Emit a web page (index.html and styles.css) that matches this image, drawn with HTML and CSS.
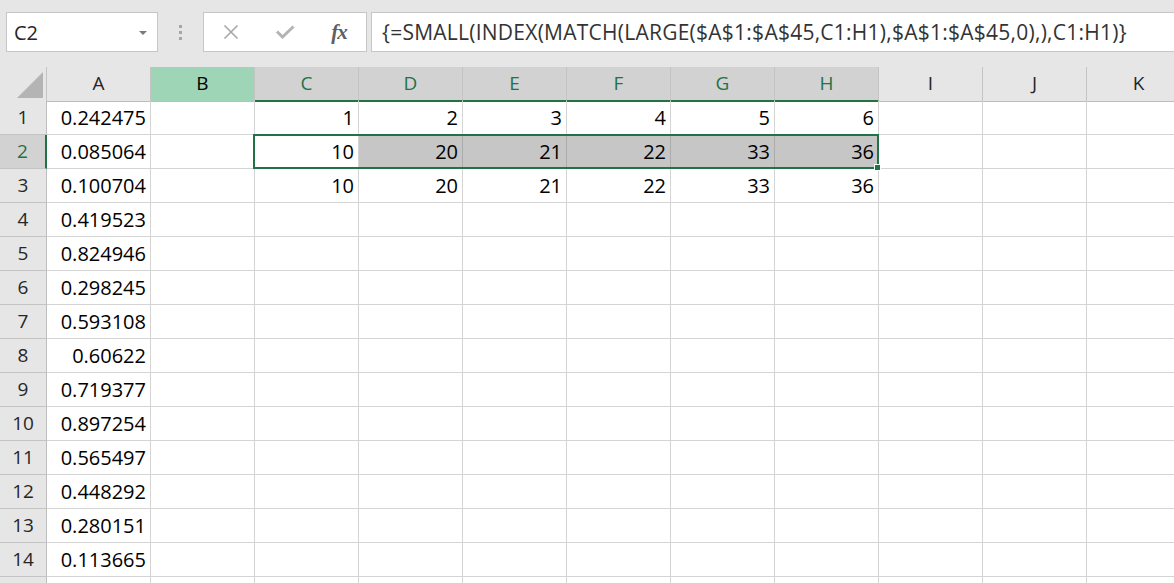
FILE: index.html
```html
<!DOCTYPE html>
<html lang="en">
<head>
    <meta charset="UTF-8">
    <title>Book1 - Excel</title>
    <link rel="stylesheet" href="styles.css">
</head>
<body>
    <div class="toolbar">
        <div class="namebox">
            <span>C2</span>
            <svg class="drop" width="8" height="5" viewBox="0 0 8 5"><path d="M0 0 L8 0 L4 4 Z" fill="#7a7a7a"/></svg>
        </div>
        <div class="grip"><i></i><i></i><i></i></div>
        <div class="fx-buttons">
            <span><svg width="16" height="14" viewBox="0 0 16 14"><path d="M1.5 0.5 L14.5 13.5 M14.5 0.5 L1.5 13.5" stroke="#a8a8a8" stroke-width="1.6" fill="none"/></svg></span>
            <span><svg width="20" height="14" viewBox="0 0 20 14"><path d="M2 6.5 L7.5 12 L18.5 1.5" stroke="#b4b4b4" stroke-width="3" fill="none"/></svg></span>
            <span class="fx">fx</span>
        </div>
        <div class="formula">{=SMALL(INDEX(MATCH(LARGE($A$1:$A$45,C1:H1),$A$1:$A$45,0),),C1:H1)}</div>
    </div>

    <div class="sheet">
        <div class="row head">
            <div class="corner"><svg width="26" height="26" viewBox="0 0 26 26"><path d="M0 26 L26 26 L26 0 Z" fill="#b4b4b4"/></svg></div>
            <div class="ch">A</div>
            <div class="ch active">B</div>
            <div class="ch sel">C</div>
            <div class="ch sel">D</div>
            <div class="ch sel">E</div>
            <div class="ch sel">F</div>
            <div class="ch sel">G</div>
            <div class="ch sel">H</div>
            <div class="ch">I</div>
            <div class="ch">J</div>
            <div class="ch">K</div>
        </div>
        <div class="row">
            <div class="rh">1</div><div class="cell">0.242475</div><div class="cell"></div>
            <div class="cell">1</div><div class="cell">2</div><div class="cell">3</div><div class="cell">4</div><div class="cell">5</div><div class="cell">6</div>
            <div class="cell"></div><div class="cell"></div><div class="cell"></div>
        </div>
        <div class="row">
            <div class="rh sel">2</div><div class="cell">0.085064</div><div class="cell"></div>
            <div class="cell">10</div><div class="cell hl">20</div><div class="cell hl">21</div><div class="cell hl">22</div><div class="cell hl">33</div><div class="cell hl">36</div>
            <div class="cell"></div><div class="cell"></div><div class="cell"></div>
        </div>
        <div class="row">
            <div class="rh">3</div><div class="cell">0.100704</div><div class="cell"></div>
            <div class="cell">10</div><div class="cell">20</div><div class="cell">21</div><div class="cell">22</div><div class="cell">33</div><div class="cell">36</div>
            <div class="cell"></div><div class="cell"></div><div class="cell"></div>
        </div>
        <div class="row">
            <div class="rh">4</div><div class="cell">0.419523</div><div class="cell"></div>
            <div class="cell"></div><div class="cell"></div><div class="cell"></div><div class="cell"></div><div class="cell"></div><div class="cell"></div>
            <div class="cell"></div><div class="cell"></div><div class="cell"></div>
        </div>
        <div class="row">
            <div class="rh">5</div><div class="cell">0.824946</div><div class="cell"></div>
            <div class="cell"></div><div class="cell"></div><div class="cell"></div><div class="cell"></div><div class="cell"></div><div class="cell"></div>
            <div class="cell"></div><div class="cell"></div><div class="cell"></div>
        </div>
        <div class="row">
            <div class="rh">6</div><div class="cell">0.298245</div><div class="cell"></div>
            <div class="cell"></div><div class="cell"></div><div class="cell"></div><div class="cell"></div><div class="cell"></div><div class="cell"></div>
            <div class="cell"></div><div class="cell"></div><div class="cell"></div>
        </div>
        <div class="row">
            <div class="rh">7</div><div class="cell">0.593108</div><div class="cell"></div>
            <div class="cell"></div><div class="cell"></div><div class="cell"></div><div class="cell"></div><div class="cell"></div><div class="cell"></div>
            <div class="cell"></div><div class="cell"></div><div class="cell"></div>
        </div>
        <div class="row">
            <div class="rh">8</div><div class="cell">0.60622</div><div class="cell"></div>
            <div class="cell"></div><div class="cell"></div><div class="cell"></div><div class="cell"></div><div class="cell"></div><div class="cell"></div>
            <div class="cell"></div><div class="cell"></div><div class="cell"></div>
        </div>
        <div class="row">
            <div class="rh">9</div><div class="cell">0.719377</div><div class="cell"></div>
            <div class="cell"></div><div class="cell"></div><div class="cell"></div><div class="cell"></div><div class="cell"></div><div class="cell"></div>
            <div class="cell"></div><div class="cell"></div><div class="cell"></div>
        </div>
        <div class="row">
            <div class="rh">10</div><div class="cell">0.897254</div><div class="cell"></div>
            <div class="cell"></div><div class="cell"></div><div class="cell"></div><div class="cell"></div><div class="cell"></div><div class="cell"></div>
            <div class="cell"></div><div class="cell"></div><div class="cell"></div>
        </div>
        <div class="row">
            <div class="rh">11</div><div class="cell">0.565497</div><div class="cell"></div>
            <div class="cell"></div><div class="cell"></div><div class="cell"></div><div class="cell"></div><div class="cell"></div><div class="cell"></div>
            <div class="cell"></div><div class="cell"></div><div class="cell"></div>
        </div>
        <div class="row">
            <div class="rh">12</div><div class="cell">0.448292</div><div class="cell"></div>
            <div class="cell"></div><div class="cell"></div><div class="cell"></div><div class="cell"></div><div class="cell"></div><div class="cell"></div>
            <div class="cell"></div><div class="cell"></div><div class="cell"></div>
        </div>
        <div class="row">
            <div class="rh">13</div><div class="cell">0.280151</div><div class="cell"></div>
            <div class="cell"></div><div class="cell"></div><div class="cell"></div><div class="cell"></div><div class="cell"></div><div class="cell"></div>
            <div class="cell"></div><div class="cell"></div><div class="cell"></div>
        </div>
        <div class="row">
            <div class="rh">14</div><div class="cell">0.113665</div><div class="cell"></div>
            <div class="cell"></div><div class="cell"></div><div class="cell"></div><div class="cell"></div><div class="cell"></div><div class="cell"></div>
            <div class="cell"></div><div class="cell"></div><div class="cell"></div>
        </div>
        <div class="row">
            <div class="rh"></div><div class="cell"></div><div class="cell"></div>
            <div class="cell"></div><div class="cell"></div><div class="cell"></div><div class="cell"></div><div class="cell"></div><div class="cell"></div>
            <div class="cell"></div><div class="cell"></div><div class="cell"></div>
        </div>

        <!-- selection box over C2:H2 -->
        <div class="selection"></div>
        <div class="fill-handle"></div>
    </div>
</body>
</html>
```

FILE: styles.css
```css
:root {
    --green: #217346;
    --grid: #d4d4d4;
    --head-bg: #e6e6e6;
    --head-line: #c4c4c4;
    --head-sel: #d2d2d2;
}
body {
    margin: 0;
    overflow: hidden;
    background: #fff;
    font-family: "Open Sans", "Noto Sans", sans-serif;
    color: #000;
}

/* formula bar */
.toolbar {
    display: flex;
    align-items: flex-start;
    height: 67px;
    padding: 12px 0 0 6px;
    box-sizing: border-box;
    background: var(--head-bg);
    overflow: hidden;
}
.namebox {
    width: 152px;
    height: 40px;
    box-sizing: border-box;
    border: 1px solid #c6c6c6;
    background: #fff;
    display: flex;
    align-items: center;
    justify-content: space-between;
    padding: 0 10px 0 7px;
    font-size: 20px;
    color: #262626;
}
.namebox .drop {
    margin-top: 2px;
}
.grip {
    width: 45px;
    height: 40px;
    display: flex;
    flex-direction: column;
    align-items: center;
    justify-content: center;
    gap: 3px;
}
.grip i {
    display: block;
    width: 3px;
    height: 3px;
    background: #a6a6a6;
}
.fx-buttons {
    width: 164px;
    height: 40px;
    box-sizing: border-box;
    border: 1px solid #c6c6c6;
    background: #fff;
    display: flex;
    align-items: center;
}
.fx-buttons span {
    width: 54px;
    display: flex;
    justify-content: center;
    align-items: center;
}
.fx-buttons .fx {
    font-family: "Liberation Serif", "DejaVu Serif", serif;
    font-style: italic;
    font-weight: bold;
    font-size: 21px;
    color: #5f5f5f;
    letter-spacing: -1px;
}
.formula {
    flex: 1;
    height: 40px;
    margin: 0 -20px 0 4px;
    box-sizing: border-box;
    border: 1px solid #c6c6c6;
    background: #fff;
    padding-left: 10px;
    line-height: 38px;
    font-size: 21px;
    letter-spacing: 0.25px;
    color: #333;
    white-space: nowrap;
}

/* grid */
.sheet {
    position: relative;
}
.row {
    display: grid;
    grid-template-columns: 47px repeat(11, 104px);
    height: 34px;
}
.row > div {
    box-sizing: border-box;
    border-right: 1px solid var(--grid);
    border-bottom: 1px solid var(--grid);
}
.head > div {
    background: var(--head-bg);
    border-right-color: var(--head-line);
    border-bottom-color: #bdbdbd;
}
.corner {
    display: flex;
    align-items: flex-end;
    justify-content: flex-end;
    padding: 0 3px 3px 0;
}
.corner svg {
    display: block;
}
.ch {
    text-align: center;
    line-height: 33px;
    font-size: 19px;
    color: #262626;
}
.head .ch.active {
    background: #9fd5b7;
    color: #000;
}
.head .ch.sel {
    background: var(--head-sel);
    color: var(--green);
    border-bottom: 2px solid var(--green);
}
.row > .rh {
    background: var(--head-bg);
    border-right-color: #bdbdbd;
    border-bottom-color: var(--head-line);
    text-align: center;
    line-height: 33px;
    font-size: 19px;
    color: #262626;
}
.row > .rh.sel {
    background: var(--head-sel);
    color: var(--green);
    border-right: 2px solid var(--green);
}
.cell {
    text-align: right;
    padding-right: 4px;
    line-height: 33px;
    font-size: 20px;
    white-space: nowrap;
}
.row > .cell.hl {
    background: #c6c6c6;
    border-right-color: #ababab;
}

.selection {
    position: absolute;
    left: 253px;
    top: 67px;
    width: 626px;
    height: 35px;
    box-sizing: border-box;
    border: 2px solid var(--green);
    pointer-events: none;
}
.fill-handle {
    position: absolute;
    left: 874px;
    top: 97px;
    width: 5px;
    height: 5px;
    background: var(--green);
    border: 1px solid #fff;
}
```
